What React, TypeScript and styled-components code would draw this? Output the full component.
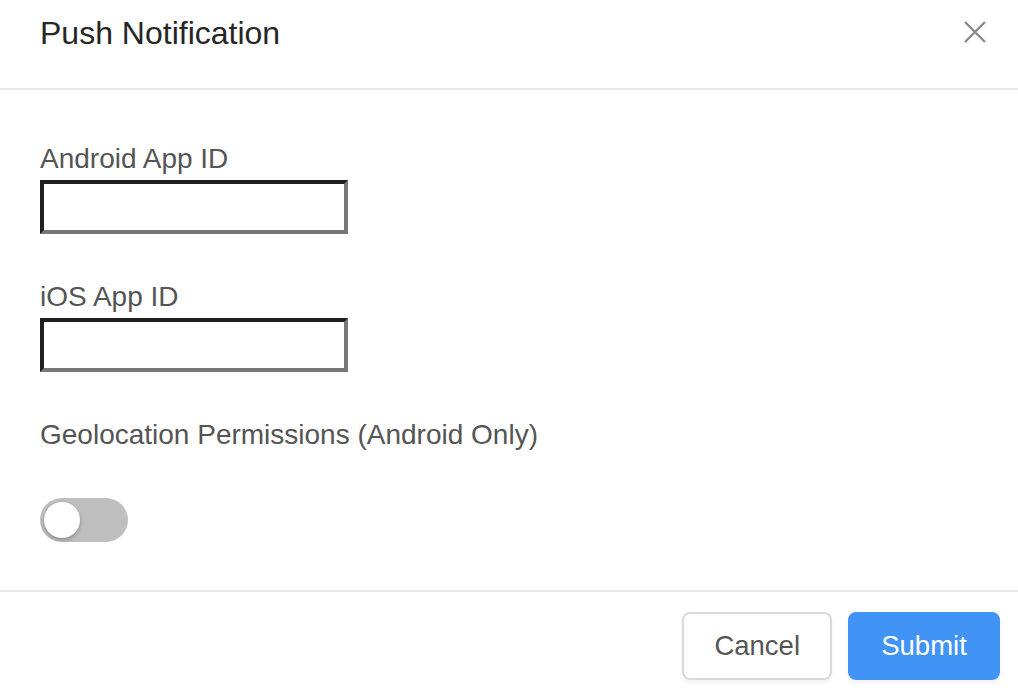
import React, { useState } from "react";
import styled, { createGlobalStyle } from "styled-components";

const Global = createGlobalStyle`
  html, body { margin: 0; padding: 0; background: #ffffff; }
  body { font-family: "Liberation Sans", Arial, Helvetica, sans-serif; }
  * { box-sizing: border-box; }
`;

const Modal = styled.div`
  width: 1018px;
  min-height: 694px;
  background: #fff;
  display: flex;
  flex-direction: column;
`;

const Header = styled.header`
  height: 90px;
  display: flex;
  justify-content: space-between;
  align-items: flex-start;
  padding: 13px 30px 0 40px;
  border-bottom: 2px solid #e8e8e8;
`;

const Title = styled.h1`
  margin: 0;
  font-size: 32px;
  line-height: 40px;
  font-weight: 400;
  color: #262626;
`;

const CloseButton = styled.button`
  margin-top: 6px;
  width: 26px;
  height: 26px;
  padding: 0;
  border: 0;
  background: transparent;
  cursor: pointer;
  display: flex;
  align-items: center;
  justify-content: center;
`;

const Body = styled.div`
  padding: 53px 40px 48px;
  display: flex;
  flex-direction: column;
  gap: 47px;
  border-bottom: 2px solid #e8e8e8;
`;

const Field = styled.div`
  display: flex;
  flex-direction: column;
  align-items: flex-start;
  gap: 5px;
`;

const Label = styled.label`
  font-size: 28px;
  line-height: 32px;
  color: #555;
`;

const Input = styled.input`
  width: 308px;
  height: 54px;
  border: 4px solid;
  border-color: #1f1f1f #777 #777 #1f1f1f;
  background: #fff;
  font-size: 20px;
  padding: 0 8px;
  outline: none;
`;

const Track = styled.button<{ $on: boolean }>`
  width: 88px;
  height: 44px;
  border-radius: 22px;
  border: 0;
  padding: 4px;
  background: ${(p) => (p.$on ? "#4193f5" : "#bfbfbf")};
  display: flex;
  justify-content: ${(p) => (p.$on ? "flex-end" : "flex-start")};
  align-items: center;
  cursor: pointer;
`;

const Knob = styled.span`
  width: 36px;
  height: 36px;
  border-radius: 50%;
  background: #fff;
  box-shadow: 0 2px 4px rgba(0, 0, 0, 0.28);
`;

const Footer = styled.footer`
  display: flex;
  justify-content: flex-end;
  gap: 16px;
  padding: 20px 18px 14px;
`;

const Button = styled.button<{ $primary?: boolean }>`
  height: 68px;
  min-width: ${(p) => (p.$primary ? "152px" : "149px")};
  padding: 0 30px;
  border-radius: 8px;
  font-family: "Liberation Sans", Arial, Helvetica, sans-serif;
  font-size: 27.5px;
  cursor: pointer;
  border: 2px solid ${(p) => (p.$primary ? "#4193f5" : "#dadada")};
  background: ${(p) => (p.$primary ? "#4193f5" : "#fff")};
  color: ${(p) => (p.$primary ? "#fff" : "#555")};
  box-shadow: 0 3px 5px rgba(0, 0, 0, 0.05);
`;

export default function App() {
  const [geo, setGeo] = useState(false);
  return (
    <>
      <Global />
      <Modal>
        <Header>
          <Title>Push Notification</Title>
          <CloseButton aria-label="Close">
            <svg width="26" height="26" viewBox="0 0 26 26">
              <path d="M3 3 L23 23 M23 3 L3 23" stroke="#8a8a8a" strokeWidth="2.4" fill="none" />
            </svg>
          </CloseButton>
        </Header>
        <Body>
          <Field>
            <Label>Android App ID</Label>
            <Input />
          </Field>
          <Field>
            <Label>iOS App ID</Label>
            <Input />
          </Field>
          <Field>
            <Label>Geolocation Permissions (Android Only)</Label>
          </Field>
          <Track $on={geo} onClick={() => setGeo(!geo)} aria-label="Geolocation">
            <Knob />
          </Track>
        </Body>
        <Footer>
          <Button>Cancel</Button>
          <Button $primary>Submit</Button>
        </Footer>
      </Modal>
    </>
  );
}
